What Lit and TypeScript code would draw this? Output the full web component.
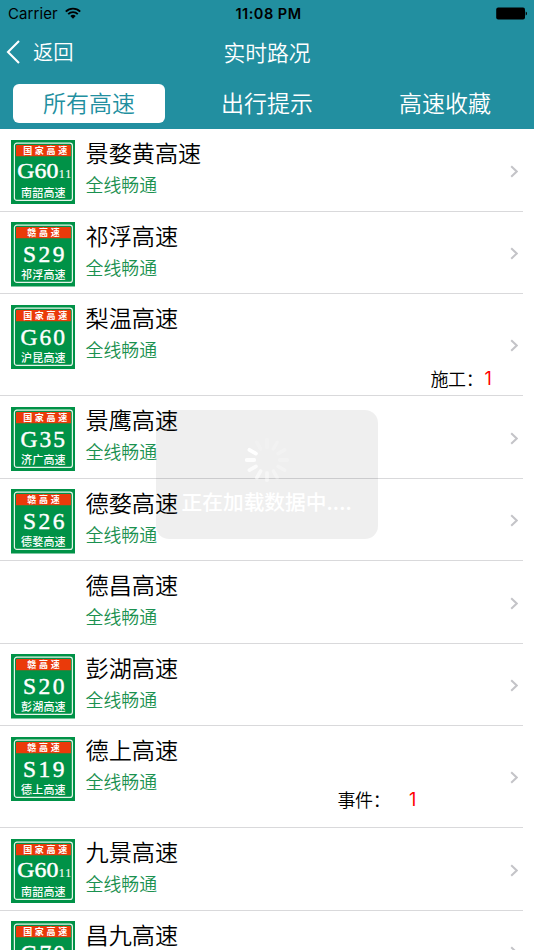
import { LitElement, html, svg, css, nothing } from "lit";
import { customElement, property } from "lit/decorators.js";

interface Sign {
  band: string;
  code: string;
  sub?: string;
  label: string;
}

interface Road {
  name: string;
  sign?: Sign;
  notice?: { kind: "work" | "event"; label: string; count: number };
}

const NATIONAL = "国家高速";
const PROVINCE = "赣高速";

const roads: Road[] = [
  { name: "景婺黄高速", sign: { band: NATIONAL, code: "G60", sub: "11", label: "南韶高速" } },
  { name: "祁浮高速", sign: { band: PROVINCE, code: "S29", label: "祁浮高速" } },
  {
    name: "梨温高速",
    sign: { band: NATIONAL, code: "G60", label: "沪昆高速" },
    notice: { kind: "work", label: "施工：", count: 1 },
  },
  { name: "景鹰高速", sign: { band: NATIONAL, code: "G35", label: "济广高速" } },
  { name: "德婺高速", sign: { band: PROVINCE, code: "S26", label: "德婺高速" } },
  { name: "德昌高速" },
  { name: "彭湖高速", sign: { band: PROVINCE, code: "S20", label: "彭湖高速" } },
  {
    name: "德上高速",
    sign: { band: PROVINCE, code: "S19", label: "德上高速" },
    notice: { kind: "event", label: "事件：", count: 1 },
  },
  { name: "九景高速", sign: { band: NATIONAL, code: "G60", sub: "11", label: "南韶高速" } },
  { name: "昌九高速", sign: { band: NATIONAL, code: "G70", label: "" } },
];

@customElement("road-sign")
class RoadSign extends LitElement {
  @property({ attribute: false }) sign?: Sign;

  static styles = css`
    :host { display: block; width: 64.5px; height: 64.5px; }
    svg { display: block; width: 100%; height: 100%; }
    text { fill: #fff; }
    .cjk { font-family: "Noto Sans CJK SC", sans-serif; }
    .band { font-size: 9px; font-weight: 700; }
    .label { font-size: 11px; font-weight: 500; }
    .code { font-family: "Liberation Serif", serif; font-size: 23.5px; stroke: #fff; stroke-width: 0.45px; }
    .small { font-size: 21px; }
    .sub { font-family: "Liberation Serif", serif; font-size: 12px; stroke: #fff; stroke-width: 0.1px; }
  `;

  render() {
    const s = this.sign;
    if (!s) return nothing;
    const national = s.band === NATIONAL;
    const wide = s.sub !== undefined;
    const serial = s.code.startsWith("S");
    return html`<svg viewBox="0 0 64.5 64.5">
      <rect width="64.5" height="64.5" fill="#009247"></rect>
      <rect x="3.4" y="3.2" width="58" height="57.2" rx="2.5" fill="none" stroke="#e6f4ea" stroke-width="1.2"></rect>
      <path d="M5 16.2V6Q5 5 6 5H58.9Q59.9 5 59.9 6V16.2Z" fill="#ea3a0a"></path>
      <text class="cjk band" x=${national ? 12.2 : 16.3} y="13.5" textLength=${national ? 44 : 32.5}>${s.band}</text>
      <text class="code ${wide ? "small" : ""}" x=${wide ? 6.3 : serial ? 12 : 9.6}
        y=${wide ? 38.4 : serial ? 40.3 : 39.9} textLength=${wide ? 41 : serial ? 41.5 : 44.5}
        lengthAdjust=${wide ? "spacingAndGlyphs" : "spacing"}>${s.code}</text>
      ${wide ? svg`<text class="sub" x="47.8" y="38.4" textLength="12.5">${s.sub}</text>` : nothing}
      ${s.label ? svg`<text class="cjk label" x="10" y="56.5" textLength="44.6">${s.label}</text>` : nothing}
    </svg>`;
  }
}

@customElement("road-row")
class RoadRow extends LitElement {
  @property({ attribute: false }) road!: Road;

  static styles = css`
    :host { display: block; }
    .row {
      display: flex;
      box-sizing: border-box;
      width: 523.3px;
      height: 82.5px;
      padding: 0 5px 0 10.5px;
      border-bottom: 1px solid #d9d9db;
    }
    .tall { height: 102px; }
    .pic { width: 75px; padding-top: 10.3px; flex: none; }
    .body { flex: 1; padding-top: 7.8px; }
    .name { font-size: 23.15px; line-height: 31px; color: #000; font-weight: 350; }
    .status { font-size: 17.9px; line-height: 32px; color: #1b9150; font-weight: 350; }
    .notice { display: flex; font-size: 18px; line-height: 22px; color: #000; font-weight: 350; white-space: nowrap; }
    .work { padding-left: 345px; margin-top: 1.8px; }
    .event { padding-left: 252px; margin-top: -9px; gap: 17.5px; }
    .label { width: 54px; letter-spacing: -0.4px; }
    .count { color: #f00; font-family: Inter, sans-serif; font-weight: 400; padding-top: 1px; }
    .arrow { flex: none; align-self: center; width: 8px; height: 13px; margin-top: 2px; }
  `;

  render() {
    const { name, sign, notice } = this.road;
    return html`<div class="row ${notice ? "tall" : ""}">
      <div class="pic">${sign ? html`<road-sign .sign=${sign}></road-sign>` : nothing}</div>
      <div class="body">
        <div class="name">${name}</div>
        <div class="status">全线畅通</div>
        ${notice
          ? html`<div class="notice ${notice.kind}">
              <span class="label">${notice.label}</span><span class="count">${notice.count}</span>
            </div>`
          : nothing}
      </div>
      <svg class="arrow" viewBox="0 0 8 13"><path d="M1.2 1.2L6.7 6.5L1.2 11.8" fill="none" stroke="#c4c4c8" stroke-width="2"></path></svg>
    </div>`;
  }
}

@customElement("loading-hud")
class LoadingHud extends LitElement {
  static styles = css`
    :host {
      display: flex;
      flex-direction: column;
      align-items: center;
      box-sizing: border-box;
      width: 221.5px;
      height: 129px;
      padding-top: 27px;
      border-radius: 13px;
      background: rgba(0, 0, 0, 0.063);
    }
    .spinner { width: 46px; height: 46px; display: block; }
    .text { margin-top: 2.5px; font-size: 20.7px; line-height: 30px; font-weight: 500; color: #fff; white-space: nowrap; }
    .dots { letter-spacing: 0.2px; }
  `;

  render() {
    const alphas = [0.16, 0.18, 0.2, 0.22, 0.25, 0.3, 0.42, 0.56, 0.72, 0.88, 1, 0.16];
    return html`<svg class="spinner" viewBox="-23 -23 46 46">
        ${alphas.map(
          (a, i) => svg`<line y1="-20.3" y2="-12.8" stroke="#fff" stroke-width="3.8" stroke-linecap="round"
            stroke-opacity=${a} transform="rotate(${i * 30})"></line>`,
        )}
      </svg>
      <div class="text">正在加载数据中<span class="dots">....</span></div>`;
  }
}

@customElement("app-root")
class AppRoot extends LitElement {
  static styles = css`
    :host {
      display: block;
      position: relative;
      width: 534px;
      height: 950px;
      overflow: hidden;
      background: #fff;
      font-family: "Noto Sans CJK SC", sans-serif;
    }
    .top { background: #228fa0; height: 129.4px; color: #fff; }
    .statusbar {
      display: grid;
      grid-template-columns: 1fr auto 1fr;
      align-items: center;
      height: 28px;
      padding: 0 8px;
      font: 15px/28px Inter, sans-serif;
      color: #000;
    }
    .carrier { display: flex; align-items: center; gap: 7px; letter-spacing: 0.1px; }
    .wifi { width: 16px; height: 12px; margin-top: -3px; }
    .clock { font-weight: 600; font-size: 14.5px; letter-spacing: 0.5px; padding-left: 3px; }
    .battery { width: 31px; height: 13px; justify-self: end; margin: -1px -1px 0 0; }
    .nav {
      display: grid;
      grid-template-columns: 1fr auto 1fr;
      align-items: center;
      height: 48px;
      padding: 0 6px;
      font-weight: 350;
    }
    .back { display: flex; align-items: center; gap: 12px; font-size: 20.3px; }
    .back span { margin-top: -2px; }
    .chev { width: 15px; height: 24px; }
    .title { font-size: 21.8px; margin-top: -2px; }
    .tabs {
      display: grid;
      grid-template-columns: repeat(3, 1fr);
      padding: 8px 0 0;
      justify-items: center;
    }
    .tab {
      box-sizing: border-box;
      width: 152.5px;
      height: 39px;
      border-radius: 6px;
      text-align: center;
      font-size: 23px;
      line-height: 37px;
      font-weight: 350;
    }
    .active { background: #fff; color: #228fa0; }
    .hud { position: absolute; left: 156px; top: 410.3px; }
  `;

  render() {
    return html`<header class="top">
        <div class="statusbar">
          <div class="carrier">
            <span>Carrier</span>
            <svg class="wifi" viewBox="0 0 16 12">
              <g fill="none" stroke="#000" stroke-width="1.9">
                <path d="M0.8 4.6A10.2 10.2 0 0 1 15.2 4.6"></path>
                <path d="M3.2 7.1A6.8 6.8 0 0 1 12.8 7.1"></path>
              </g>
              <path d="M8 11.8L5.3 9.1A3.8 3.8 0 0 1 10.7 9.1Z"></path>
            </svg>
          </div>
          <span class="clock">11:08 PM</span>
          <svg class="battery" viewBox="0 0 31 13">
            <rect x="0.2" y="0.5" width="28.8" height="12" rx="2"></rect>
            <path d="M29.7 4.5Q31 4.8 31 6.5T29.7 8.5Z"></path>
          </svg>
        </div>
        <div class="nav">
          <div class="back">
            <svg class="chev" viewBox="0 0 15 24"><path d="M13 1L2 12L13 23" fill="none" stroke="#fff" stroke-width="2.1"></path></svg>
            <span>返回</span>
          </div>
          <span class="title">实时路况</span>
        </div>
        <nav class="tabs">
          <div class="tab active">所有高速</div>
          <div class="tab">出行提示</div>
          <div class="tab">高速收藏</div>
        </nav>
      </header>
      <main>${roads.map((r) => html`<road-row .road=${r}></road-row>`)}</main>
      <loading-hud class="hud"></loading-hud>`;
  }
}
